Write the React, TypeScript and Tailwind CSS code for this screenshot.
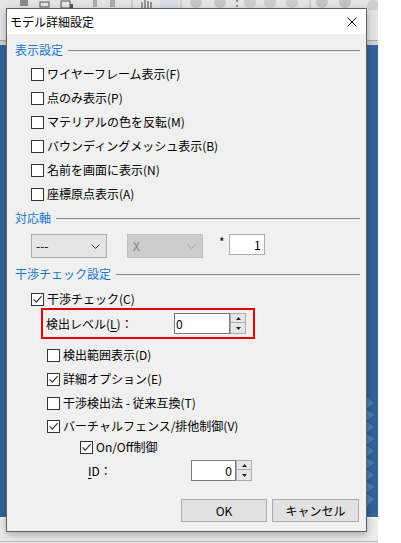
import React from 'react';

const Box = ({ checked }: { checked?: boolean }) => (
  <span className="w-[13px] h-[13px] border border-[#333333] bg-white flex items-center justify-center shrink-0">
    {checked && (
      <svg width="11" height="11" viewBox="0 0 11 11">
        <path d="M1.6 5.4 L4.3 8.1 L9.6 2.2" fill="none" stroke="#333333" strokeWidth="1.2" />
      </svg>
    )}
  </span>
);

const Check = ({ label, checked, className }: { label: string; checked?: boolean; className: string }) => (
  <div className={`flex items-center gap-[3px] ${className}`}>
    <Box checked={checked} />
    <span className="text-[12px] leading-[16px] text-black whitespace-nowrap">{label}</span>
  </div>
);

const Group = ({ title, className }: { title: string; className: string }) => (
  <div className={`flex items-center h-[16px] pl-[8px] pr-[6px] ${className}`}>
    <span className="text-[#1874cd] text-[12px] leading-[16px] whitespace-nowrap">{title}</span>
    <div className="flex-1 ml-[5px] border-t border-[#8a8a8a]" />
  </div>
);

const SpinButtons = () => (
  <div className="flex flex-col w-[16px] h-[21px]">
    <div className="h-[10px] border border-[#acacac] bg-[#e6e6e6] flex items-center justify-center">
      <svg width="5" height="3" viewBox="0 0 5 3"><path d="M0 3 L2.5 0 L5 3 Z" fill="#222" /></svg>
    </div>
    <div className="h-[11px] border border-[#acacac] border-t-0 bg-[#e6e6e6] flex items-center justify-center">
      <svg width="5" height="3" viewBox="0 0 5 3"><path d="M0 0 L2.5 3 L5 0 Z" fill="#222" /></svg>
    </div>
  </div>
);

const Chevron = ({ color }: { color: string }) => (
  <svg width="9" height="5" viewBox="0 0 9 5">
    <path d="M0.5 0.5 L4.5 4.5 L8.5 0.5" fill="none" stroke={color} strokeWidth="1" />
  </svg>
);

export default function App() {
  return (
    <div className="relative w-[401px] h-[543px] overflow-hidden bg-white font-['Noto_Sans_CJK_JP','Noto_Sans',sans-serif]">
      {/* application behind the dialog */}
      <div className="absolute left-0 top-0 w-[378px] h-[41px] bg-[#e4e4e4] border-b border-[#a8a8a8]">
        <svg width="378" height="10" viewBox="0 0 378 10" className="absolute left-0 top-0">
          <rect x="20" y="0" width="8" height="6" fill="#8a8a8a" />
          <rect x="40" y="2" width="9" height="5" fill="none" stroke="#555" />
          <rect x="61" y="1" width="9" height="7" fill="none" stroke="#555" />
          <rect x="70" y="4" width="3" height="4" fill="#555" />
          <rect x="93" y="0" width="4" height="7" fill="#aaa" />
          <rect x="110" y="0" width="5" height="7" fill="#aaa" />
          <line x1="132" y1="0" x2="132" y2="8" stroke="#bbb" />
          <path d="M142 8 L142 2 M145 8 L145 0 M148 8 L148 1 M151 8 L151 2" stroke="#444" />
          <rect x="160" y="0" width="18" height="8" fill="#d7dde6" />
          <line x1="181" y1="0" x2="181" y2="8" stroke="#bbb" />
          <circle cx="196" cy="2" r="6" fill="#c8c8c8" />
          <circle cx="220" cy="2" r="6" fill="#c8c8c8" />
          <rect x="236" y="0" width="2" height="2" fill="#888" />
          <rect x="236" y="5" width="2" height="2" fill="#888" />
          <circle cx="250" cy="2" r="6" fill="#cccccc" />
          <circle cx="270" cy="2" r="6" fill="#cccccc" />
          <circle cx="292" cy="2" r="6" fill="#cccccc" />
          <line x1="310" y1="0" x2="310" y2="8" stroke="#bbb" />
          <circle cx="322" cy="2" r="6" fill="#c4c4c4" />
          <circle cx="345" cy="2" r="6" fill="#c4c4c4" />
          <circle cx="373" cy="6" r="6" fill="#cfcfcf" />
        </svg>
      </div>
      <div className="absolute left-0 top-[41px] w-[378px] h-[4px] bg-[#d2d2d2]" />
      <div className="absolute left-0 top-[45px] w-[378px] h-[472px] bg-[#31639c]">
        <svg width="12" height="110" viewBox="0 0 12 110" className="absolute right-0 bottom-[10px]">
          <path d="M0 0 L8 6 L0 12 L8 18 L0 24 L8 30 L0 36 L8 42 L0 48 L8 54 L0 60 L8 66 L0 72 L8 78 L0 84 L8 90 L0 96 L8 102 L0 110 Z" fill="#4f7fb5" />
        </svg>
      </div>
      <div className="absolute left-0 top-[517px] w-[378px] h-[26px] bg-[#ececec] border-t border-[#ffffff]">
        <div className="absolute left-0 top-[23px] w-full h-[1px] bg-[#b8b8b8]" />
      </div>

      {/* dialog */}
      <div className="absolute left-[6px] top-[8px] w-[361px] h-[524px] border border-[#5f5f5f] bg-[#f0f0f0] shadow-[0_3px_8px_rgba(0,0,0,0.28)] flex flex-col">
        <div className="h-[25px] bg-white flex items-center justify-between pl-[3px] pr-[9px] shrink-0">
          <span className="text-[12px] leading-[16px] text-black">モデル詳細設定</span>
          <svg width="10" height="10" viewBox="0 0 10 10">
            <path d="M0.5 0.5 L9.5 9.5 M9.5 0.5 L0.5 9.5" stroke="#000" strokeWidth="1" />
          </svg>
        </div>

        <Group title="表示設定" className="mt-[8px]" />
        <div className="flex flex-col pl-[24px] mt-[4px]">
          <Check label="ワイヤーフレーム表示(F)" className="h-[24px]" />
          <Check label="点のみ表示(P)" className="h-[24px]" />
          <Check label="マテリアルの色を反転(M)" className="h-[24px]" />
          <Check label="バウンディングメッシュ表示(B)" className="h-[24px]" />
          <Check label="名前を画面に表示(N)" className="h-[24px]" />
          <Check label="座標原点表示(A)" className="h-[24px]" />
        </div>

        <Group title="対応軸" className="mt-[4px]" />
        <div className="flex items-start pl-[24px] mt-[8px] h-[24px]">
          <div className="w-[76px] h-[24px] border border-[#adadad] bg-[#e5e5e5] flex items-center justify-between pl-[4px] pr-[6px]">
            <span className="text-[12px] leading-[16px] text-black">---</span>
            <Chevron color="#333333" />
          </div>
          <div className="w-[76px] h-[24px] ml-[20px] border border-[#bfbfbf] bg-[#cccccc] flex items-center justify-between pl-[5px] pr-[6px]">
            <span className="text-[12px] leading-[16px] text-[#838383]">X</span>
            <Chevron color="#a3a3a3" />
          </div>
          <span className="ml-[16px] mt-[2px] text-[12px] leading-[12px] text-black">*</span>
          <div className="ml-[4px] w-[36px] h-[21px] border border-[#abadb3] bg-white flex items-center justify-end pr-[3px]">
            <span className="text-[12px] leading-[16px] text-black">1</span>
          </div>
        </div>

        <Group title="干渉チェック設定" className="mt-[8px]" />
        <Check label="干渉チェック(C)" checked className="h-[18px] mt-[8px] pl-[24px]" />

        <div className="ml-[34px] w-[214px] h-[31px] border-2 border-[#e60000] flex items-center pl-[3px]">
          <span className="w-[128px] text-[12px] leading-[16px] text-black whitespace-nowrap">
            検出レベル(<span className="underline underline-offset-2">L</span>)：
          </span>
          <div className="w-[56px] h-[21px] border border-[#7a7a7a] bg-white flex items-center pl-[1px]">
            <span className="text-[12px] leading-[16px] text-black">0</span>
          </div>
          <SpinButtons />
        </div>

        <div className="flex flex-col pl-[40px] mt-[4px]">
          <Check label="検出範囲表示(D)" className="h-[24px]" />
          <Check label="詳細オプション(E)" checked className="h-[24px]" />
          <Check label="干渉検出法 - 従来互換(T)" className="h-[24px]" />
          <Check label="バーチャルフェンス/排他制御(V)" checked className="h-[22px]" />
        </div>
        <Check label="On/Off制御" checked className="h-[20px] pl-[73px]" />

        <div className="flex items-center h-[21px] mt-[3px] pl-[81px]">
          <span className="w-[103px] text-[12px] leading-[16px] text-black">
            <span className="underline underline-offset-2">I</span>D：
          </span>
          <div className="w-[45px] h-[21px] border border-[#7a7a7a] bg-white flex items-center justify-end pr-[3px]">
            <span className="text-[12px] leading-[16px] text-black">0</span>
          </div>
          <SpinButtons />
        </div>

        <div className="flex justify-end gap-[5px] pr-[7px] mt-[18px]">
          <button className="w-[86px] h-[23px] border border-[#adadad] bg-[#e1e1e1] text-[12px] leading-[16px] text-black">OK</button>
          <button className="w-[87px] h-[23px] border border-[#adadad] bg-[#e1e1e1] text-[12px] leading-[16px] text-black">キャンセル</button>
        </div>
      </div>
    </div>
  );
}
